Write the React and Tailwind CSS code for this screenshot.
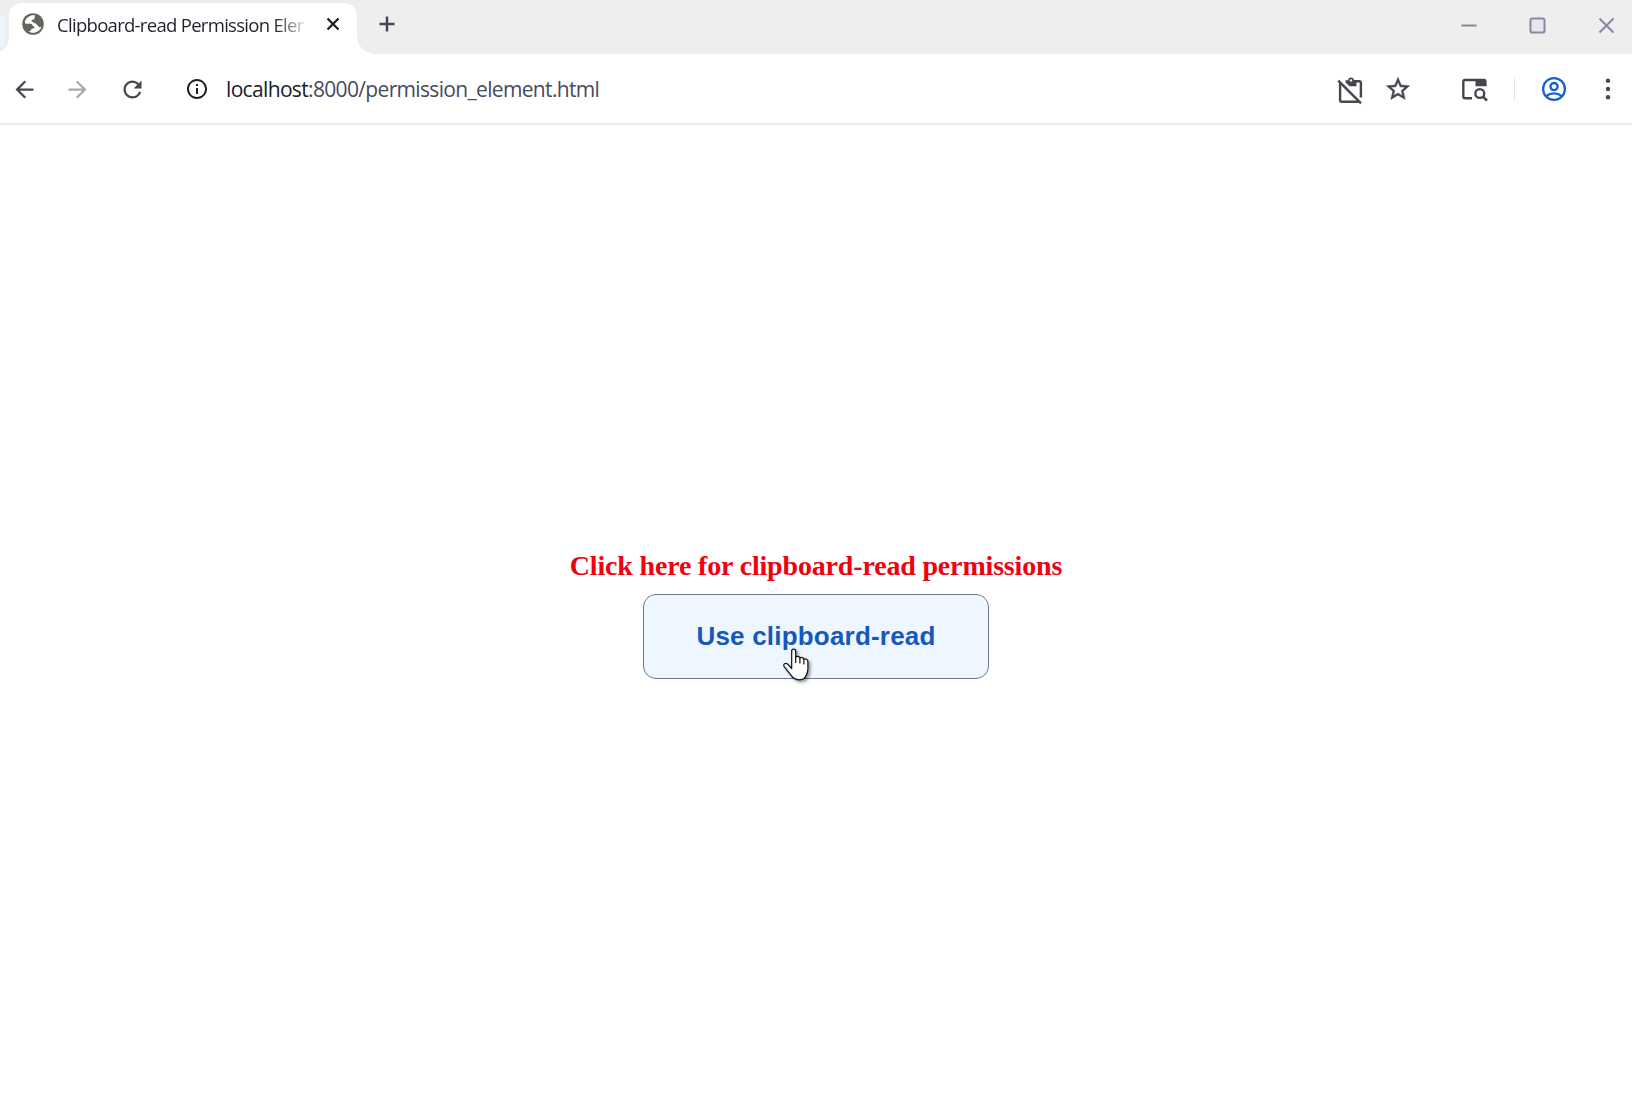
import React from "react";
import { MdArrowBack, MdArrowForward, MdRefresh, MdInfoOutline, MdStarOutline } from "react-icons/md";

function Globe() {
  return (
    <svg viewBox="0 0 22 22" className="ml-[13px] h-[22px] w-[22px] shrink-0">
      <circle cx="11" cy="11" r="10.8" fill="#65655f" />
      <path
        d="M12.800 2.300 C8.500 1.600 4.600 4.200 3 8.200 C2.500 9.600 3 10.800 5 10.800 H9.200 C10.600 10.800 10.200 13.200 12 13.500 C13 13.800 12.600 15.400 11 15.600 C9.300 15.800 9 16.500 9 17.300 C8.700 18.100 7.600 18.300 6.700 18.400 C8.300 19.500 10.500 20 12.500 19.700 C16 19 18.800 16.700 19.600 13.800 C18.600 14.400 17.200 14.300 16.400 13.300 C15.500 12.200 14.600 10.900 13 10.200 C11.600 9.600 10.300 9.100 9.700 8.300 C9.200 7.400 10 6.700 11.300 6.600 C12.900 6.500 12.500 5.300 12.500 4.500 C12.500 3.700 13.300 3.200 12.800 2.300Z"
        fill="#fff"
      />
    </svg>
  );
}

function TabStrip() {
  return (
    <header className="flex h-[54px] w-full items-end bg-[#eeeeee]">
      <svg viewBox="0 0 9 51" className="h-[51px] w-[9px] shrink-0">
        <path d="M0 12 H5 V37 Q4.500 43 0 46Z" fill="#edf5ff" />
        <path d="M9 36 Q8.500 44 0 48.500 V51 H9Z" fill="#fff" />
      </svg>
      <div className="flex h-[51px] w-[348px] shrink-0 items-start rounded-t-[13px] bg-white pt-[10px] font-['Open_Sans',sans-serif]">
        <Globe />
        <div className="-mt-px ml-[13px] w-[247px] overflow-hidden whitespace-nowrap bg-linear-to-r from-[#20202c] from-88% to-[#dcdce0] bg-clip-text text-[18.500px] leading-[25px] tracking-[-0.7px] text-transparent">
          Clipboard-read Permission Element
        </div>
        <svg viewBox="0 0 14 14" className="ml-[22px] mt-[4px] h-[14px] w-[14px] shrink-0">
          <path d="M1.500 1.500 L12.500 12.500 M12.500 1.500 L1.500 12.500" stroke="#1d1f23" strokeWidth="2.300" />
        </svg>
      </div>
      <svg viewBox="0 0 14 18" className="h-[18px] w-[14px] shrink-0">
        <path d="M0 0 Q1 14 14 17.300 V18 H0Z" fill="#fff" />
      </svg>
      <svg viewBox="0 0 16 16" className="mb-[22px] ml-[8px] h-[16px] w-[16px] shrink-0">
        <path d="M8 0.500 V15.500 M0.500 8 H15.500" stroke="#46465a" strokeWidth="2.500" />
      </svg>
      <div className="ml-auto mb-[20px] mr-[17px] flex items-center gap-[52px]">
        <svg viewBox="0 0 17 17" className="h-[17px] w-[17px]">
          <path d="M1.500 8.500 H16.500" stroke="#8888a2" strokeWidth="2" />
        </svg>
        <svg viewBox="0 0 17 17" className="h-[17px] w-[17px]">
          <rect x="1.500" y="1.500" width="14" height="14" rx="1.800" fill="#e7e7f2" stroke="#8888a2" strokeWidth="2" />
        </svg>
        <svg viewBox="0 0 17 17" className="h-[17px] w-[17px]">
          <path d="M1.500 1.500 L15.500 15.500 M15.500 1.500 L1.500 15.500" stroke="#8888a2" strokeWidth="2" />
        </svg>
      </div>
    </header>
  );
}

function ClipboardOff() {
  return (
    <svg viewBox="0 0 26 28" className="h-[28px] w-[26px]" fill="none" stroke="#46464f" strokeWidth="2.400">
      <path d="M3.100 6 V23 Q3.100 24.700 4.800 24.700 H21.500" />
      <path d="M17 4.300 H22.200 Q23.900 4.300 23.900 6 V20.500" />
      <path d="M8.500 3.300 H19.500 V9.200 H12.500 L8.500 5.400Z" fill="#46464f" stroke="none" />
      <circle cx="14" cy="3.300" r="2.900" fill="#46464f" stroke="none" />
      <circle cx="14" cy="3.400" r="1.200" fill="#fff" stroke="none" />
      <path d="M1.300 3.600 L24 26.300" strokeWidth="2.500" />
    </svg>
  );
}

function TabSearch() {
  return (
    <svg viewBox="0 0 27 24" className="h-[24px] w-[27px]" fill="none" stroke="#46464f" strokeWidth="2.400">
      <path d="M11 20.300 H4 Q2.300 20.300 2.300 18.600 V3.700 Q2.300 2 4 2 H24" />
      <path d="M14.500 0.900 H23.500 Q25.600 0.900 25.600 3 V8.200 H14.500Z" fill="#46464f" stroke="none" />
      <circle cx="18.800" cy="15.500" r="4.400" />
      <path d="M21.800 18.500 L26 22.700" strokeWidth="2.500" />
    </svg>
  );
}

function Account() {
  return (
    <svg viewBox="0 0 26 26" className="h-[26px] w-[26px]" fill="none" stroke="#1a5fd0" strokeWidth="2.300">
      <circle cx="13" cy="13" r="10.900" />
      <circle cx="13" cy="10.600" r="3.600" />
      <path d="M5.500 20 Q8.700 17.300 13 17.300 Q17.300 17.300 20.500 20" />
    </svg>
  );
}

function Toolbar() {
  return (
    <nav className="flex h-[71px] w-full items-center border-b-2 border-[#ececee] bg-white pt-px pr-[21px] pl-[11px] text-[#46464f]">
      <MdArrowBack className="h-[27px] w-[27px] shrink-0" />
      <MdArrowForward className="ml-[26px] h-[27px] w-[27px] shrink-0 text-[#a9a9ae]" />
      <MdRefresh className="ml-[28px] h-[27px] w-[27px] shrink-0" />
      <MdInfoOutline className="ml-[39px] h-[24px] w-[24px] shrink-0 text-[#1f1f26]" />
      <div className="ml-[17px] pt-px font-['Open_Sans',sans-serif] text-[21px] tracking-[-0.66px] whitespace-nowrap text-[#474a5e]">
        <span className="text-[#20202e]">localhost</span>:8000/permission_element.html
      </div>
      <div className="ml-auto flex items-center">
        <div className="mt-[3px]">
          <ClipboardOff />
        </div>
        <MdStarOutline className="ml-[21px] h-[28px] w-[28px]" strokeWidth="0.400" />
        <div className="mt-[2px] ml-[49px]">
          <TabSearch />
        </div>
        <div className="ml-[26px] h-[23px] w-[1.500px] bg-[#dfe4f2]" />
        <div className="ml-[26px]">
          <Account />
        </div>
        <svg viewBox="0 0 6 22" className="ml-[38px] h-[22px] w-[6px]" fill="#46464f">
          <circle cx="3" cy="2.700" r="2.200" />
          <circle cx="3" cy="11" r="2.200" />
          <circle cx="3" cy="19.300" r="2.200" />
        </svg>
      </div>
    </nav>
  );
}

function HandCursor() {
  return (
    <svg
      viewBox="0 0 26 33"
      className="absolute top-[54px] left-[140px] h-[33px] w-[26px] drop-shadow-[2px_2px_1.500px_rgba(0,0,0,0.4)]"
    >
      <path
        d="M8.700 20.500 V3 C8.700 0.600 12.700 0.600 12.700 3 V9 C13.700 8 16.500 8.200 16.900 10 C18 9 20.600 9.400 20.900 11.300 C22.600 10.500 24.900 11.300 24.900 13.600 V21 C24.900 25 23.300 27 22.400 28.700 C21.300 30.800 19 31.800 16 31.800 C12.300 31.800 10.300 30.600 8.400 27.700 L1 18.300 C-0.200 16.200 2.800 14.500 4.700 16.200Z"
        fill="#fff"
        stroke="#111"
        strokeWidth="1.200"
        strokeLinejoin="round"
      />
      <path d="M12.700 8.500 V14.500 M16.900 10 V15 M20.900 11.300 V16" stroke="#111" strokeWidth="1.200" strokeLinecap="round" />
    </svg>
  );
}

export default function App() {
  return (
    <div className="flex h-[1098px] w-[1632px] flex-col overflow-hidden bg-white">
      <TabStrip />
      <Toolbar />
      <main className="flex flex-1 flex-col items-center pt-[424px]">
        <h1 className="font-['Liberation_Serif',serif] text-[28px] leading-[34px] font-bold tracking-[-0.17px] whitespace-nowrap text-[#f00012]">
          Click here for clipboard-read permissions
        </h1>
        <div className="relative mt-[11px]">
          <button className="flex h-[85px] w-[346px] items-center justify-center rounded-[13px] border border-[#70769a] bg-[#eef6ff] font-['Liberation_Sans',sans-serif] text-[26px] font-bold tracking-[0.2px] whitespace-nowrap text-[#1659bb]">
            Use clipboard-read
          </button>
          <HandCursor />
        </div>
      </main>
    </div>
  );
}
